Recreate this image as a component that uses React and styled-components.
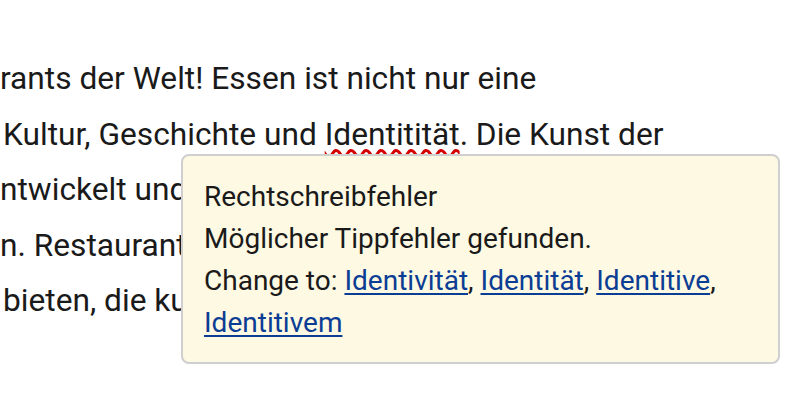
import React from "react";
import styled, { createGlobalStyle } from "styled-components";

const Global = createGlobalStyle`
  html, body { margin: 0; padding: 0; background: #fff; }
  body { font-family: Roboto, "Noto Sans", sans-serif; }
`;

const Page = styled.div`
  position: relative;
  width: 793px;
  height: 418px;
  overflow: hidden;
  background: #fff;
`;

const Article = styled.div`
  padding-top: 51px;
  display: flex;
  flex-direction: column;
  font-size: 31.7px;
  line-height: 55.5px;
  color: #1a1a1a;
  white-space: nowrap;
`;

const Line = styled.div`
  padding-left: ${(p) => p.$indent || 0}px;
`;

const Misspelled = styled.span`
  text-decoration-line: underline;
  text-decoration-style: wavy;
  text-decoration-color: #d40000;
  text-decoration-thickness: 2.5px;
  text-underline-offset: 4px;
`;

const Tooltip = styled.div`
  position: absolute;
  left: 181px;
  top: 154px;
  width: 599px;
  box-sizing: border-box;
  padding: 20px 20px 18px 21px;
  background: #fef9e2;
  border: 2px solid #cfcfcf;
  border-radius: 8px;
  font-size: 28px;
  line-height: 42px;
  color: #1a1a1a;
`;

const Row = styled.div``;

const Suggestion = styled.a`
  color: #0b3d95;
  text-decoration: underline;
  text-decoration-thickness: 2px;
  text-underline-offset: 3px;
  cursor: pointer;
`;

export default function App() {
  const suggestions = ["Identivität", "Identität", "Identitive", "Identitivem"];
  return (
    <>
      <Global />
      <Page>
        <Article>
          <Line>rants der Welt! Essen ist nicht nur eine</Line>
          <Line $indent={3}>
            Kultur, Geschichte und <Misspelled>Identitität</Misspelled>. Die Kunst der
          </Line>
          <Line>ntwickelt und die Küche hat sich stetig weiter</Line>
          <Line>n. Restaurants sind Orte, an denen Menschen</Line>
          <Line $indent={3}>bieten, die kulinarische Vielfalt zeigen.</Line>
        </Article>
        <Tooltip>
          <Row>Rechtschreibfehler</Row>
          <Row>Möglicher Tippfehler gefunden.</Row>
          <Row>
            Change to:{" "}
            {suggestions.map((s, i) => (
              <React.Fragment key={s}>
                <Suggestion>{s}</Suggestion>
                {i < suggestions.length - 1 ? ", " : ""}
              </React.Fragment>
            ))}
          </Row>
        </Tooltip>
      </Page>
    </>
  );
}
